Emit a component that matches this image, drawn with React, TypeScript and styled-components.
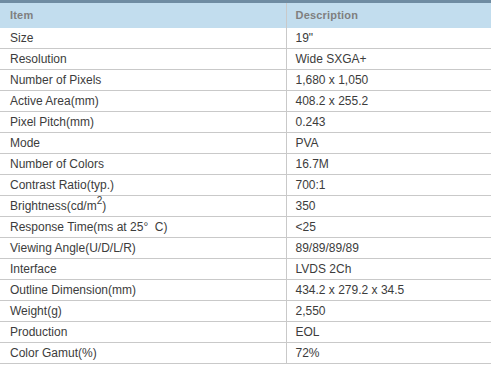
import React from "react";
import styled, { createGlobalStyle } from "styled-components";

const Global = createGlobalStyle`
  html, body { margin: 0; padding: 0; background: #ffffff; }
  body { font-family: "Liberation Sans", Arial, sans-serif; }
`;

const Table = styled.table`
  width: 491px;
  border-collapse: collapse;
  border-spacing: 0;
  table-layout: fixed;
  border-top: 3px solid #6f8ca2;
`;

const HeadCell = styled.th<{ $first?: boolean }>`
  height: 26px;
  padding: 0 0 0 ${(p) => (p.$first ? 10 : 9)}px;
  background: #c2ddee;
  color: #7f7f7f;
  font-size: 11px;
  font-weight: bold;
  letter-spacing: 0.2px;
  text-align: left;
  box-sizing: border-box;
  border-left: ${(p) => (p.$first ? "none" : "1px solid #c9c9c9")};
`;

const Row = styled.tr`
  border-bottom: 1px solid #c9c9c9;
`;

const Cell = styled.td<{ $first?: boolean }>`
  height: 20px;
  padding: 0 0 0 ${(p) => (p.$first ? 10 : 9)}px;
  color: #3c3c3c;
  font-size: 12px;
  line-height: 20px;
  white-space: nowrap;
  box-sizing: border-box;
  border-left: ${(p) => (p.$first ? "none" : "1px solid #c9c9c9")};
`;

const Sup = styled.sup`
  font-size: 10px;
  line-height: 0;
  vertical-align: 6px;
`;

const rows: [React.ReactNode, string][] = [
  ["Size", '19"'],
  ["Resolution", "Wide SXGA+"],
  ["Number of Pixels", "1,680 x 1,050"],
  ["Active Area(mm)", "408.2 x 255.2"],
  ["Pixel Pitch(mm)", "0.243"],
  ["Mode", "PVA"],
  ["Number of Colors", "16.7M"],
  ["Contrast Ratio(typ.)", "700:1"],
  [
    <>
      Brightness(cd/m<Sup>2</Sup>)
    </>,
    "350",
  ],
  ["Response Time(ms at 25\u00B0\u00A0 C)", "<25"],
  ["Viewing Angle(U/D/L/R)", "89/89/89/89"],
  ["Interface", "LVDS 2Ch"],
  ["Outline Dimension(mm)", "434.2 x 279.2 x 34.5"],
  ["Weight(g)", "2,550"],
  ["Production", "EOL"],
  ["Color Gamut(%)", "72%"],
];

export default function App() {
  return (
    <>
      <Global />
      <Table>
        <colgroup>
          <col style={{ width: 286 }} />
          <col style={{ width: 205 }} />
        </colgroup>
        <thead>
          <tr>
            <HeadCell $first>Item</HeadCell>
            <HeadCell>Description</HeadCell>
          </tr>
        </thead>
        <tbody>
          {rows.map(([k, v], i) => (
            <Row key={i}>
              <Cell $first>{k}</Cell>
              <Cell>{v}</Cell>
            </Row>
          ))}
        </tbody>
      </Table>
    </>
  );
}
